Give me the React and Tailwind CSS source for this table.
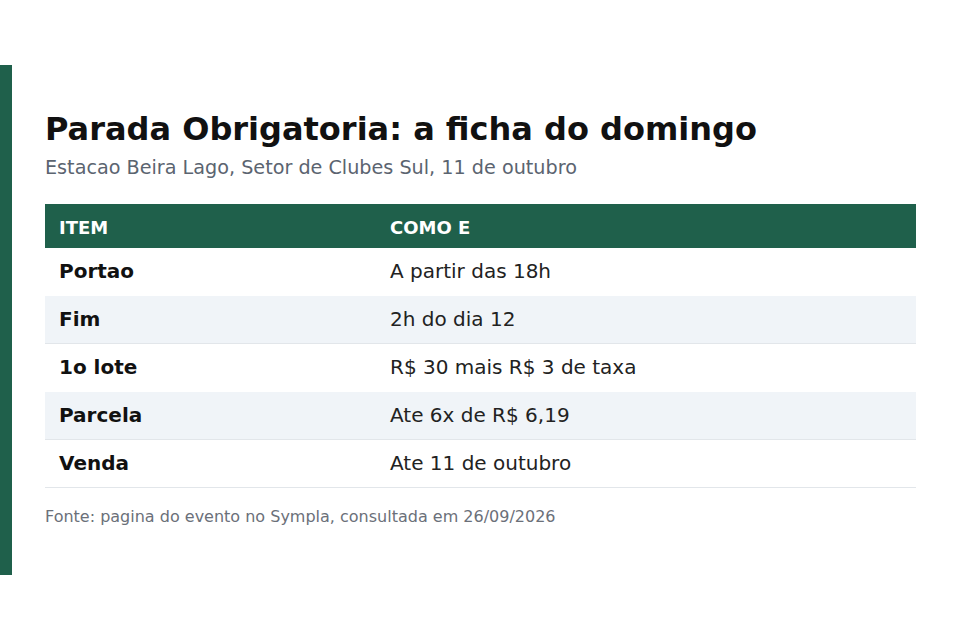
export default function App() {
  const rows = [
    ["Portao", "A partir das 18h"],
    ["Fim", "2h do dia 12"],
    ["1o lote", "R$ 30 mais R$ 3 de taxa"],
    ["Parcela", "Ate 6x de R$ 6,19"],
    ["Venda", "Ate 11 de outubro"],
  ];
  return (
    <div className="w-[960px] h-[640px] bg-white flex items-center" style={{ fontFamily: '"DejaVu Sans", sans-serif' }}>
      <div className="w-full h-[510px] border-l-[12px] border-[#1f604b] pl-[33px] pr-[44px] flex flex-col justify-center">
        <h1 className="text-[32px] leading-[38px] font-bold text-[#111111]">Parada Obrigatoria: a ficha do domingo</h1>
        <p className="mt-[8px] text-[19.2px] leading-[24px] text-[#5b6470]">Estacao Beira Lago, Setor de Clubes Sul, 11 de outubro</p>
        <table className="mt-[24px] w-full border-collapse">
          <thead>
            <tr className="bg-[#1f604b] text-white h-[44px]">
              <th className="w-[331px] text-left px-[14px] pt-[4px] text-[18px] font-bold">ITEM</th>
              <th className="text-left px-[14px] pt-[4px] text-[18px] font-bold">COMO E</th>
            </tr>
          </thead>
          <tbody>
            {rows.map((r, i) => (
              <tr
                key={i}
                className={
                  "h-[48px] " +
                  (i % 2 === 1 ? "bg-[#f0f4f8] border-b border-[#e2e6ea]" : i === rows.length - 1 ? "border-b border-[#e2e6ea]" : "")
                }
              >
                <td className="px-[14px] pb-[2px] text-[20px] leading-[24px] font-bold text-[#111111]">{r[0]}</td>
                <td className="px-[14px] pb-[2px] text-[20px] leading-[24px] text-[#222222]">{r[1]}</td>
              </tr>
            ))}
          </tbody>
        </table>
        <p className="mt-[19px] mb-[3px] text-[16px] leading-[20px] text-[#6b7079]">Fonte: pagina do evento no Sympla, consultada em 26/09/2026</p>
      </div>
    </div>
  );
}
